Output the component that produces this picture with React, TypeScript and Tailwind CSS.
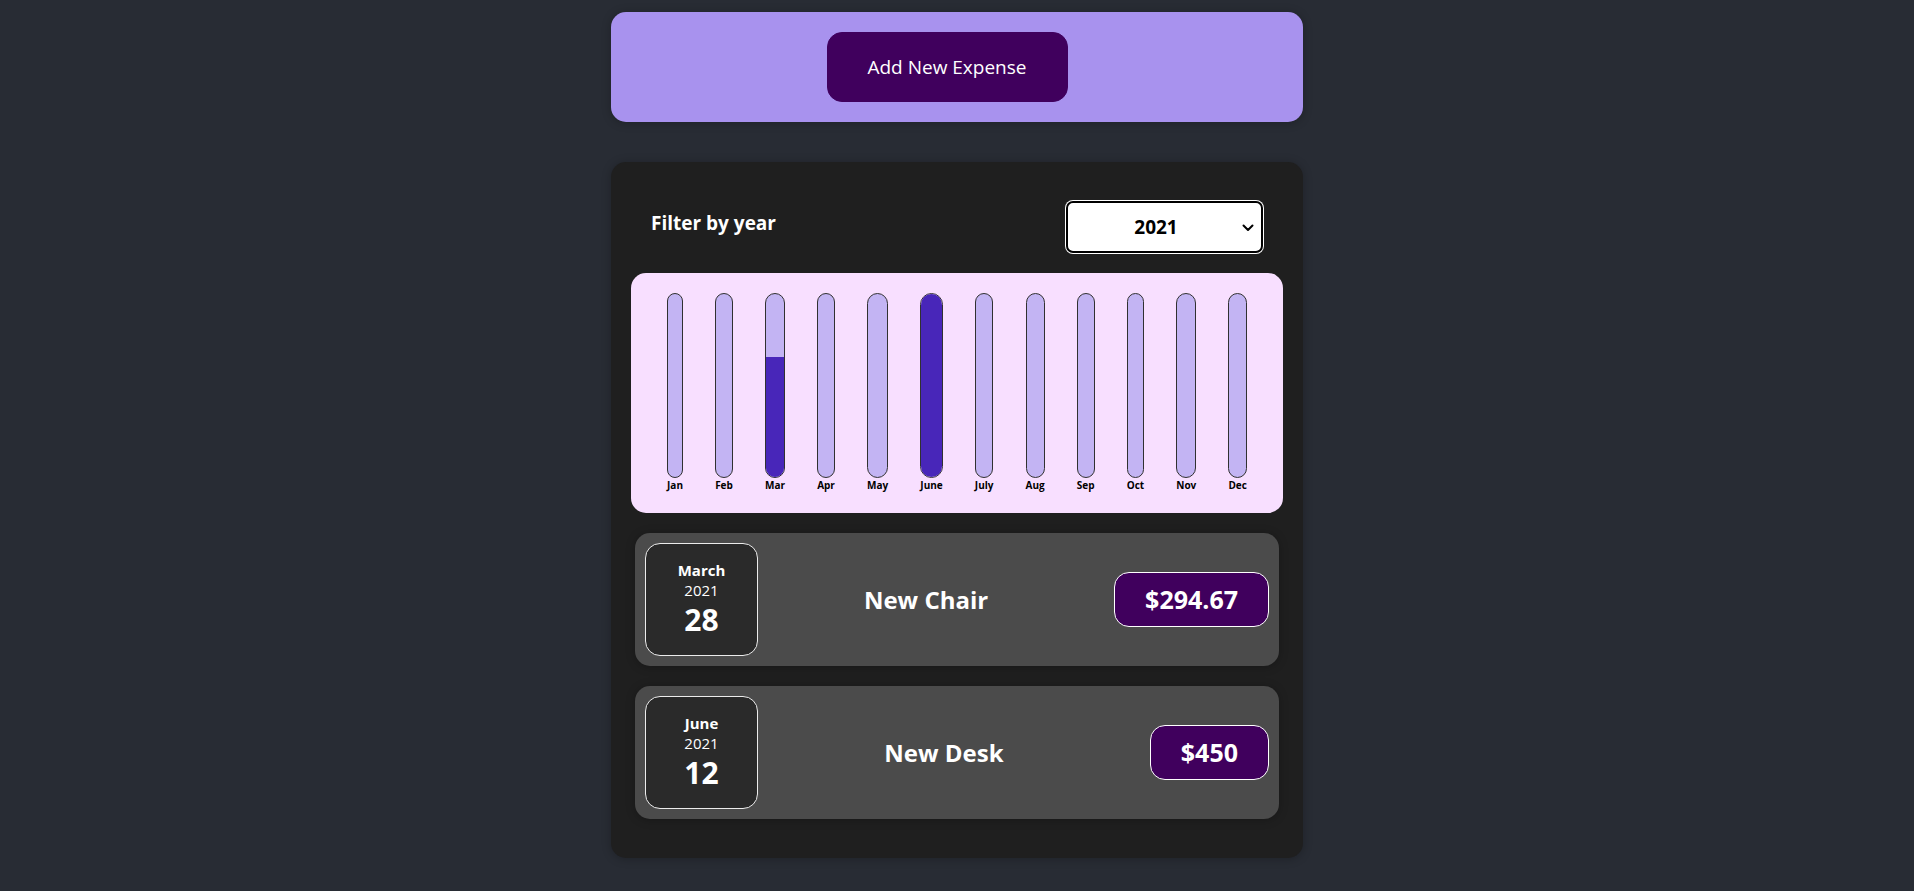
import React from "react";

const months = [
  { label: "Jan", value: 0 },
  { label: "Feb", value: 0 },
  { label: "Mar", value: 294.67 },
  { label: "Apr", value: 0 },
  { label: "May", value: 0 },
  { label: "June", value: 450 },
  { label: "July", value: 0 },
  { label: "Aug", value: 0 },
  { label: "Sep", value: 0 },
  { label: "Oct", value: 0 },
  { label: "Nov", value: 0 },
  { label: "Dec", value: 0 },
];

const expenses = [
  { month: "March", year: "2021", day: "28", title: "New Chair", amount: "$294.67" },
  { month: "June", year: "2021", day: "12", title: "New Desk", amount: "$450" },
];

function ExpenseItem({ e }: { e: (typeof expenses)[number] }) {
  return (
    <li className="flex items-center rounded-[15px] bg-[#4b4b4b] p-[10px] shadow-[0_1px_10px_rgba(0,0,0,0.25)]">
      <div className="flex h-[113px] w-[113px] shrink-0 flex-col items-center justify-center rounded-[15px] border border-[#ececec] bg-[#2a2a2a] text-white">
        <div className="text-[15px] font-bold leading-[20px]">{e.month}</div>
        <div className="text-[15px] leading-[20px]">{e.year}</div>
        <div className="text-[30px] font-bold leading-[40px]">{e.day}</div>
      </div>
      <h2 className="ml-[20px] mr-[40px] flex-1 text-center text-[24px] font-bold leading-[33px] text-white">
        {e.title}
      </h2>
      <div className="rounded-[15px] border border-white bg-[#40005d] px-[30px] py-[10px] text-[25px] font-bold leading-[33px] text-white">
        {e.amount}
      </div>
    </li>
  );
}

export default function App() {
  const max = 450;
  return (
    <div
      className="min-h-screen bg-[#282c34] pt-[12px] pb-[34px]"
      style={{ fontFamily: '"Open Sans", "Noto Sans", sans-serif' }}
    >
      <div className="mx-auto w-[692px] rounded-[15px] bg-[#a892ee] p-[20px] text-center shadow-[0_1px_10px_rgba(0,0,0,0.25)]">
        <button className="mr-[20px] h-[70px] w-[241px] rounded-[15px] border border-[#40005d] bg-[#40005d] text-[19px] leading-[30px] text-white">
          Add New Expense
        </button>
      </div>

      <div className="mx-auto mt-[40px] w-[692px] rounded-[15px] bg-[#1f1f1f] p-[20px] shadow-[0_1px_10px_rgba(0,0,0,0.25)]">
        <div className="px-[20px] text-white">
          <div className="mt-[19px] mb-[20px] flex items-center justify-between">
            <label className="mb-[8px] text-[19px] font-bold leading-[30px]">Filter by year</label>
            <div className="relative">
              <select
                defaultValue="2021"
                className="h-[52px] w-[197px] appearance-none rounded-[7px] border-2 border-black bg-white pr-[17px] text-center text-[19px] font-bold text-black shadow-[0_0_0_1px_#ffffff]"
              >
                <option value="2022">2022</option>
                <option value="2021">2021</option>
                <option value="2020">2020</option>
                <option value="2019">2019</option>
              </select>
              <svg
                className="pointer-events-none absolute right-[9px] top-[23px]"
                width="12"
                height="8"
                viewBox="0 0 12 8"
                fill="none"
              >
                <path d="M1.5 1.5L6 6L10.5 1.5" stroke="#000" strokeWidth="2" strokeLinecap="round" strokeLinejoin="round" />
              </svg>
            </div>
          </div>
        </div>

        <div className="flex h-[240px] justify-around rounded-[15px] bg-[#f8dfff] p-[20px] text-center">
          {months.map((m) => (
            <div key={m.label} className="flex h-full flex-col items-center">
              <div className="flex h-full w-full flex-col justify-end overflow-hidden rounded-[15px] border border-[#313131] bg-[#c3b4f3]">
                <div className="w-full bg-[#4826b9]" style={{ height: `${(m.value / max) * 100}%` }} />
              </div>
              <div className="text-[10px] font-bold leading-[15px] text-black">{m.label}</div>
            </div>
          ))}
        </div>

        <ul className="mx-[4px] mt-[20px] flex flex-col gap-[20px] pb-[19px]">
          {expenses.map((e) => (
            <ExpenseItem key={e.title} e={e} />
          ))}
        </ul>
      </div>
    </div>
  );
}
